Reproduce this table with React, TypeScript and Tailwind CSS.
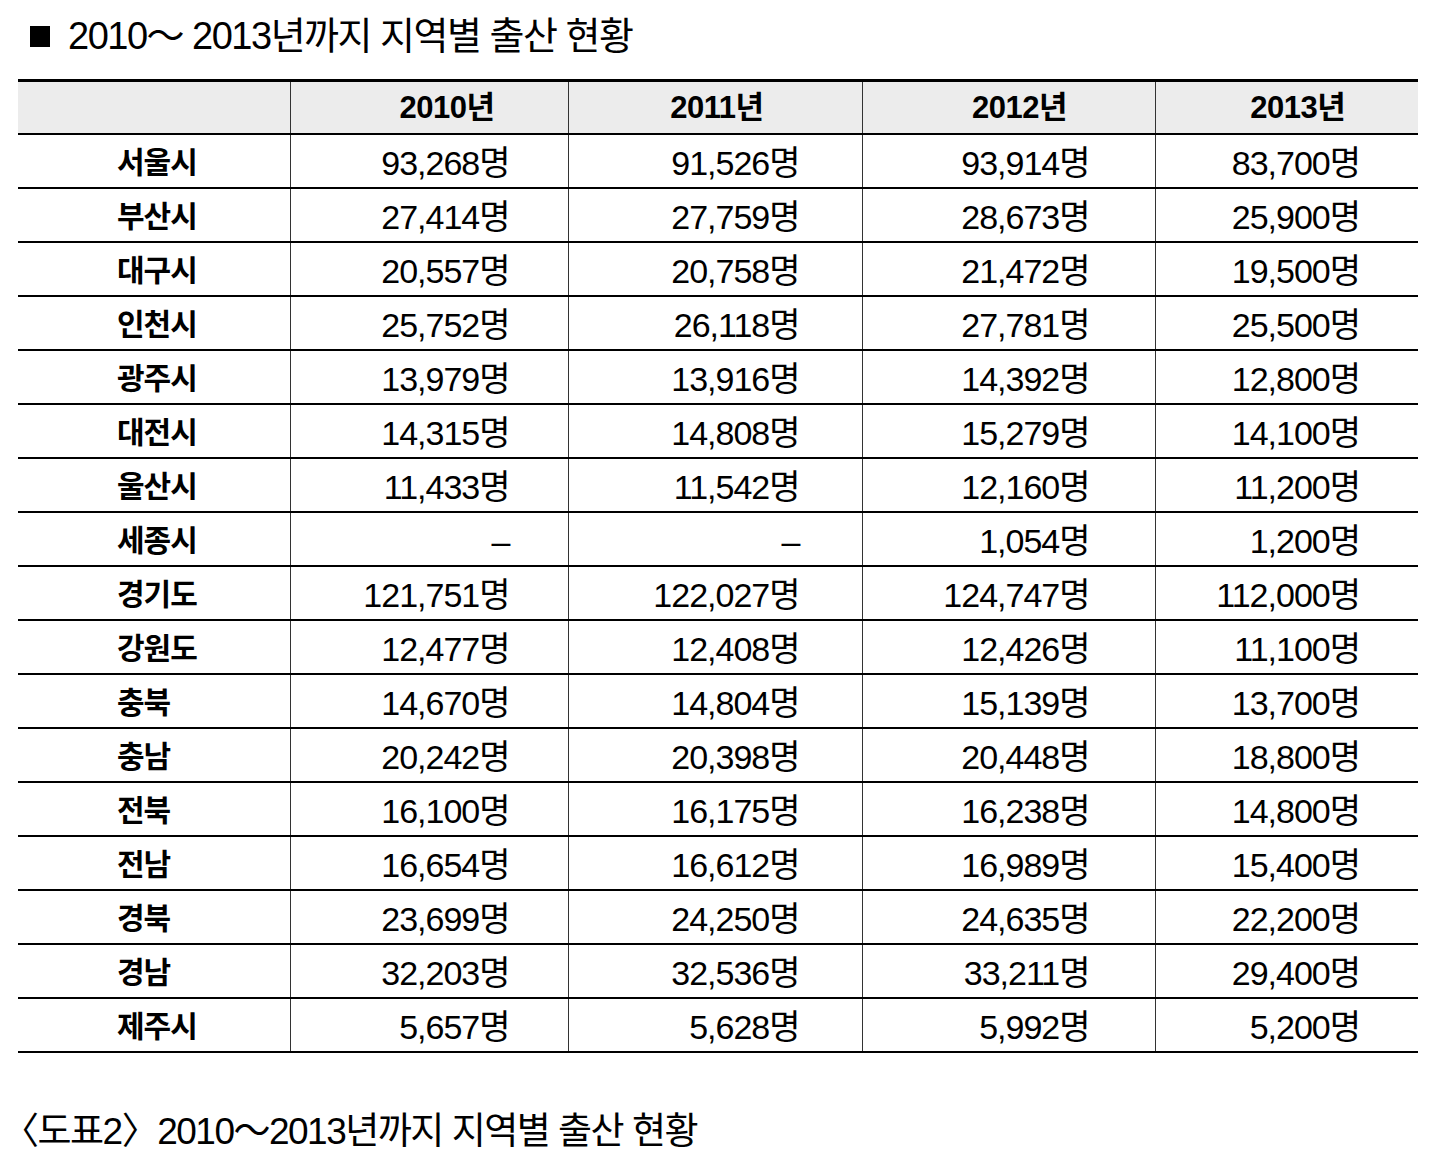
import React from "react";

const years = ["2010년", "2011년", "2012년", "2013년"];

const rows: [string, string, string, string, string][] = [
  ["서울시", "93,268명", "91,526명", "93,914명", "83,700명"],
  ["부산시", "27,414명", "27,759명", "28,673명", "25,900명"],
  ["대구시", "20,557명", "20,758명", "21,472명", "19,500명"],
  ["인천시", "25,752명", "26,118명", "27,781명", "25,500명"],
  ["광주시", "13,979명", "13,916명", "14,392명", "12,800명"],
  ["대전시", "14,315명", "14,808명", "15,279명", "14,100명"],
  ["울산시", "11,433명", "11,542명", "12,160명", "11,200명"],
  ["세종시", "–", "–", "1,054명", "1,200명"],
  ["경기도", "121,751명", "122,027명", "124,747명", "112,000명"],
  ["강원도", "12,477명", "12,408명", "12,426명", "11,100명"],
  ["충북", "14,670명", "14,804명", "15,139명", "13,700명"],
  ["충남", "20,242명", "20,398명", "20,448명", "18,800명"],
  ["전북", "16,100명", "16,175명", "16,238명", "14,800명"],
  ["전남", "16,654명", "16,612명", "16,989명", "15,400명"],
  ["경북", "23,699명", "24,250명", "24,635명", "22,200명"],
  ["경남", "32,203명", "32,536명", "33,211명", "29,400명"],
  ["제주시", "5,657명", "5,628명", "5,992명", "5,200명"],
];

// 각 열의 오른쪽 여백 / 헤더 왼쪽 여백
const padRight = ["pr-[58px]", "pr-[62px]", "pr-[65px]", "pr-[58px]"];
const headPad = ["pl-[36px]", "pl-[4px]", "pl-[22px]", "pl-[22px]"];

const font = "font-['Liberation_Sans','Noto_Sans_CJK_KR',sans-serif]";

export default function App() {
  return (
    <div className={`w-[1445px] h-[1164px] bg-white text-black ${font}`}>
      <h1 className="flex items-center pl-[30px] pt-[12px] text-[38px] leading-[48px] tracking-[-1.5px]">
        <span className="inline-block w-[20px] h-[21px] bg-black mr-[18px]" />
        2010～ 2013년까지 지역별 출산 현황
      </h1>

      <table className="ml-[18px] mt-[19px] w-[1400px] border-collapse table-fixed">
        <colgroup>
          <col className="w-[272px]" />
          <col className="w-[278px]" />
          <col className="w-[294px]" />
          <col className="w-[293px]" />
          <col className="w-[263px]" />
        </colgroup>
        <thead>
          <tr className="h-[53px] bg-[#ececec] border-t-[3px] border-b-2 border-black">
            <th className="border-r border-r-[#333]" />
            {years.map((y, i) => (
              <th
                key={y}
                className={`text-[31px] leading-[34px] font-bold tracking-[-0.5px] pt-[2px] ${headPad[i]} ${i < 3 ? "border-r border-r-[#333]" : ""}`}
              >
                {y}
              </th>
            ))}
          </tr>
        </thead>
        <tbody>
          {rows.map((r) => (
            <tr key={r[0]} className="h-[54px] border-b-2 border-black">
              <td className="text-left pl-[99px] pt-[4px] text-[30px] leading-[34px] font-bold tracking-[-1px] border-r border-r-[#333]">
                {r[0]}
              </td>
              {r.slice(1).map((v, i) => (
                <td
                  key={i}
                  className={`text-right pt-[4px] text-[34px] leading-[34px] tracking-[-1px] ${padRight[i]} ${i < 3 ? "border-r border-r-[#333]" : ""}`}
                >
                  {v}
                </td>
              ))}
            </tr>
          ))}
        </tbody>
      </table>

      <p className="pl-[2px] pt-[55px] text-[37px] leading-[48px] tracking-[-1.5px]">
        〈도표2〉2010～2013년까지 지역별 출산 현황
      </p>
    </div>
  );
}
